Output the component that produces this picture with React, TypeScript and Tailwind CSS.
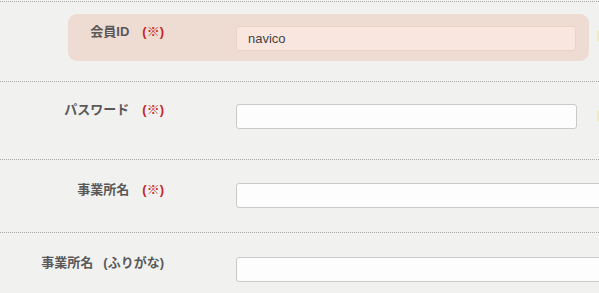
import React from 'react';

const font = { fontFamily: '"Liberation Sans", "Noto Sans CJK JP", sans-serif' };

const Required = () => <span className="ml-[13px] text-[#c8242c]">(※)</span>;

const Label: React.FC<{ children: React.ReactNode; className?: string }> = ({ children, className }) => (
  <div className={`shrink-0 text-right text-[13px] leading-[18px] font-bold text-[#595959] ${className ?? ''}`}>{children}</div>
);

const TextInput: React.FC<{ className?: string; value?: string; pink?: boolean }> = ({ className, value, pink }) => (
  <input
    readOnly
    value={value ?? ''}
    className={`h-[25px] shrink-0 rounded-[3px] border px-[11px] text-[13px] text-[#444] outline-none ${
      pink ? 'border-[#ebd3c9] bg-[#f9e6df]' : 'border-[#cacaca] bg-[#fdfdfd]'
    } ${className ?? ''}`}
    style={font}
  />
);

const Hint: React.FC<{ className?: string }> = ({ className }) => (
  <span className={`h-[12px] w-[2px] shrink-0 rounded-l-full bg-[#f1ebc4] ${className ?? ''}`} />
);

export default function App() {
  return (
    <div className="h-[293px] w-[599px] overflow-hidden bg-[#f1f1f0] pt-px" style={font}>
      {/* 会員ID */}
      <div className="flex items-start border-t border-dotted border-[#a9a9a9] pt-[12px] pb-[20px]">
        <div className="ml-[68px] flex w-[521px] shrink-0 items-start rounded-[9px] bg-[#eedbd2]">
          <Label className="w-[96px] pt-[9px]">
            会員ID<Required />
          </Label>
          <TextInput pink value="navico" className="mt-[12px] mb-[10px] ml-[72px] w-[340px]" />
        </div>
        <Hint className="mt-[16px] ml-[8px]" />
      </div>

      {/* パスワード */}
      <div className="flex items-start border-t border-dotted border-[#a9a9a9] pb-[30px]">
        <Label className="mt-[19px] w-[164px]">
          パスワード<Required />
        </Label>
        <TextInput className="mt-[22px] ml-[72px] w-[341px]" />
        <Hint className="mt-[28px] ml-auto" />
      </div>

      {/* 事業所名 */}
      <div className="flex items-start border-t border-dotted border-[#a9a9a9] pb-[24px]">
        <Label className="mt-[21px] w-[164px]">
          事業所名<Required />
        </Label>
        <TextInput className="mt-[23px] ml-[72px] w-[420px]" />
      </div>

      {/* 事業所名（ふりがな） */}
      <div className="flex items-start border-t border-dotted border-[#a9a9a9] pb-[24px]">
        <Label className="mt-[21px] w-[164px]">
          事業所名<span className="ml-[10px]">(ふりがな)</span>
        </Label>
        <TextInput className="mt-[24px] ml-[72px] w-[420px]" />
      </div>
    </div>
  );
}
